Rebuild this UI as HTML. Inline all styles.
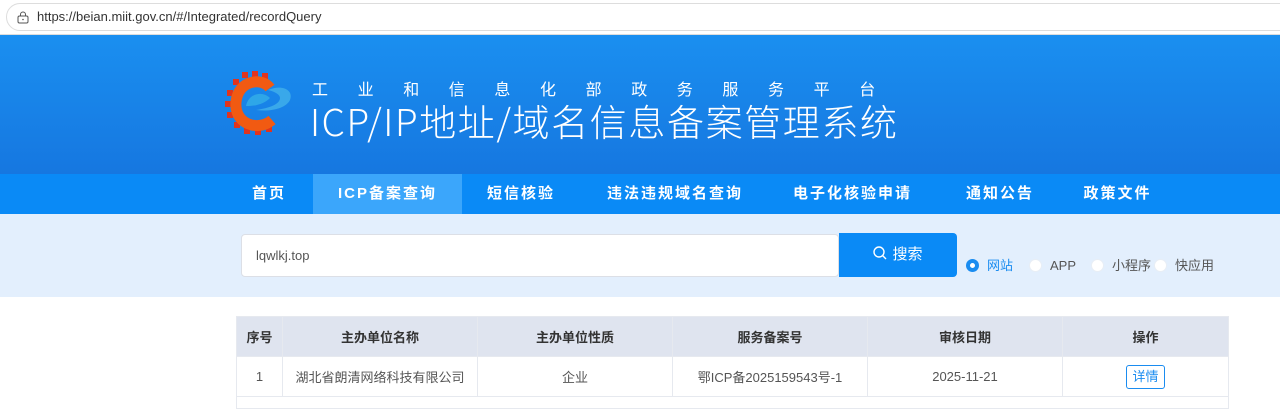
<!DOCTYPE html>
<html><head><meta charset="utf-8"><style>
*{margin:0;padding:0;box-sizing:border-box}
body{width:1280px;height:408px;overflow:hidden;background:#fff;font-family:"Liberation Sans","Noto Sans CJK SC",sans-serif;position:relative}
.bar{position:absolute;left:0;top:0;width:1280px;height:35px;background:#fff;border-bottom:1px solid #ddd}
.url{position:absolute;left:6px;top:3px;width:1300px;height:28px;border:1px solid #ddd;border-radius:14px;background:#fff;font-size:13px;color:#333;line-height:26px;padding-left:30px}
.hdr{position:absolute;left:0;top:35px;width:1280px;height:139px;background:linear-gradient(180deg,#1a8ff0 0%,#1677e0 100%)}
.t1{position:absolute;left:312px;top:76px;color:#fff;font-size:16px;letter-spacing:29.6px;font-family:"Noto Sans CJK SC",sans-serif;white-space:nowrap}
.t2{position:absolute;left:310px;top:94px;color:#fff;font-size:37px;letter-spacing:1.6px;font-family:"Noto Sans CJK SC",sans-serif;font-weight:300;line-height:52px;white-space:nowrap}
.nav{position:absolute;left:0;top:174px;width:1280px;height:40px;background:#0a8af6}
.nav span{position:absolute;top:0;height:40px;line-height:40px;color:#fff;font-size:15px;font-weight:bold;letter-spacing:2px;text-align:center}
.srch{position:absolute;left:0;top:214px;width:1280px;height:83px;background:#e3effd}
.inp{position:absolute;left:241px;top:234px;width:598px;height:43px;background:#fff;border:1px solid #dcdfe6;border-radius:4px;font-size:13px;color:#555;line-height:41px;padding-left:14px}
.btn{position:absolute;left:839px;top:233px;width:118px;height:44px;background:#0a8af6;border-radius:0 4px 4px 0;color:#fff;font-size:15px;line-height:44px;text-align:center}
.rad{position:absolute;top:259px;font-size:13px;color:#555;line-height:14px}
.rad i{display:inline-block;width:13px;height:13px;border-radius:50%;background:#fff;vertical-align:-2px;margin-right:8px;border:1px solid #e8eef5}
table{position:absolute;left:236px;top:316px;border-collapse:collapse;font-size:13px;color:#555}
td,th{border:1px solid #e6e9ef;text-align:center;height:40px}
th{background:#dfe4ef;color:#333;font-weight:bold}
</style></head><body>
<div class="bar"><div class="url"><svg style="position:absolute;left:10px;top:7px" width="12" height="13" viewBox="0 0 12 13"><rect x="1" y="5" width="10" height="7" rx="1.5" fill="none" stroke="#555"/><path d="M3.5 5V3.5a2.5 2.5 0 015 0V5" fill="none" stroke="#555"/><circle cx="6" cy="8.5" r=".8" fill="#555"/></svg>https://beian.miit.gov.cn/#/Integrated/recordQuery</div></div>
<div class="hdr"></div>
<svg style="position:absolute;left:224px;top:70px" width="72" height="70" viewBox="0 0 72 70">
<g fill="#e0341e"><rect x="18" y="2" width="6" height="6"/><rect x="28" y="1" width="6" height="6"/><rect x="38" y="3" width="6" height="6"/><rect x="9" y="9" width="6" height="6"/><rect x="3" y="20" width="6" height="6"/><rect x="1" y="31" width="6" height="6"/><rect x="3" y="42" width="6" height="6"/><rect x="10" y="52" width="6" height="6"/><rect x="20" y="58" width="6" height="6"/><rect x="31" y="59" width="6" height="6"/><rect x="42" y="56" width="6" height="6"/></g>
<path d="M46 18C38 7 14 10 12 32c-2 22 22 30 36 18" fill="none" stroke="#f15a12" stroke-width="11"/>
<path d="M22 36c2-12 16-16 24-8-6 6-14 8-24 8z" fill="#2ea6e8"/>
<path d="M44 20c14-6 26 0 22 10-4 8-18 12-34 10 14-2 24-6 24-12 0-3-4-6-12-8z" fill="#39a8ea"/>
</svg>
<div class="t1">工业和信息化部政务服务平台</div>
<div class="t2">ICP/IP地址/域名信息备案管理系统</div>
<div class="nav">
<span style="left:236px;width:66px">首页</span>
<span style="left:313px;width:149px;background:#3ba6fb">ICP备案查询</span>
<span style="left:475px;width:92px">短信核验</span>
<span style="left:595px;width:160px">违法违规域名查询</span>
<span style="left:780px;width:145px">电子化核验申请</span>
<span style="left:950px;width:100px">通知公告</span>
<span style="left:1070px;width:95px">政策文件</span>
</div>
<div class="srch"></div>
<div class="inp">lqwlkj.top</div>
<div class="btn"><svg width="14" height="14" viewBox="0 0 14 14" style="vertical-align:-1px;margin-right:5px"><circle cx="6" cy="6" r="5" fill="none" stroke="#fff" stroke-width="1.4"/><path d="M9.8 9.8L13 13" stroke="#fff" stroke-width="1.4"/></svg>搜索</div>
<div class="rad" style="left:966px;color:#1a8cf0"><i style="border:4px solid #1a8cf0"></i>网站</div>
<div class="rad" style="left:1029px"><i></i>APP</div>
<div class="rad" style="left:1091px"><i></i>小程序</div>
<div class="rad" style="left:1154px"><i style="margin-right:8px"></i>快应用</div>
<table>
<tr><th style="width:46px">序号</th><th style="width:195px">主办单位名称</th><th style="width:195px">主办单位性质</th><th style="width:195px">服务备案号</th><th style="width:195px">审核日期</th><th style="width:166px">操作</th></tr>
<tr><td>1</td><td>湖北省朗清网络科技有限公司</td><td>企业</td><td>鄂ICP备2025159543号-1</td><td>2025-11-21</td><td><span style="display:inline-block;border:1px solid #1a8cf0;color:#1a8cf0;border-radius:3px;padding:3px 5px;line-height:16px">详情</span></td></tr>
<tr><td colspan="6" style="height:12px"></td></tr>
</table>
</body></html>
